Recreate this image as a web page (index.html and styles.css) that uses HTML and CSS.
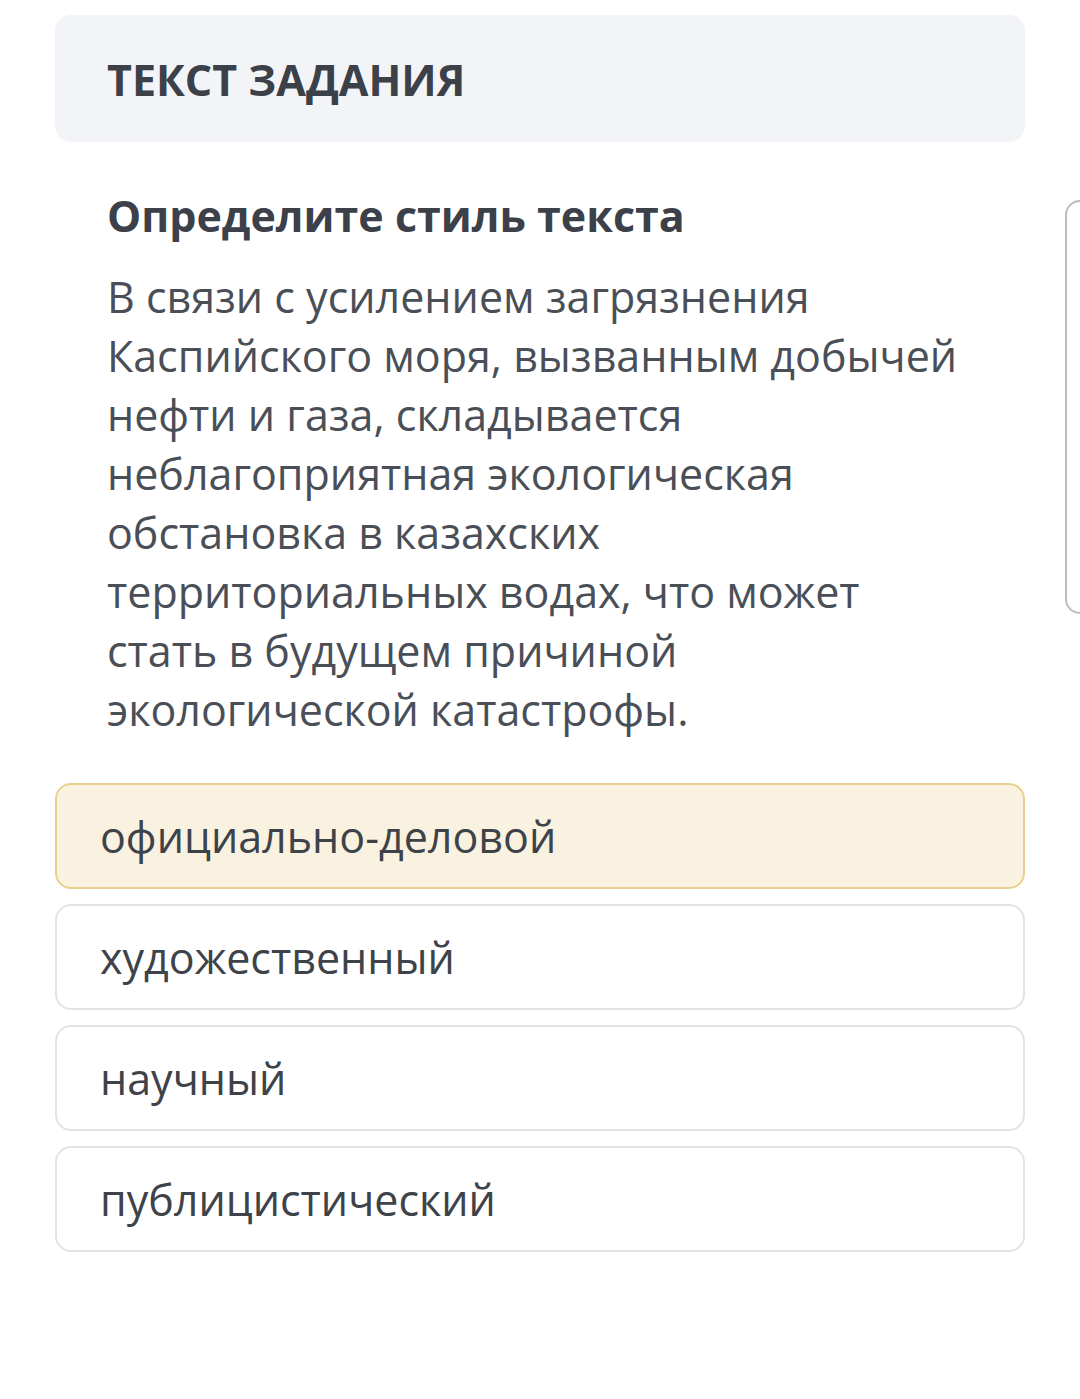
FILE: index.html
```html
<!DOCTYPE html>
<html lang="ru">
<head>
<meta charset="utf-8">
<link rel="stylesheet" href="styles.css">
</head>
<body>
<div class="page">
  <main class="main">
    <div class="task-header">ТЕКСТ ЗАДАНИЯ</div>
    <div class="task-body">
      <h2 class="question">Определите стиль текста</h2>
      <p class="passage">В связи с усилением загрязнения Каспийского моря, вызванным добычей нефти и газа, складывается неблагоприятная экологическая обстановка в казахских территориальных водах, что может стать в будущем причиной экологической катастрофы.</p>
    </div>
    <div class="options">
      <div class="option selected">официально-деловой</div>
      <div class="option">художественный</div>
      <div class="option">научный</div>
      <div class="option">публицистический</div>
    </div>
  </main>
  <aside class="side-card"></aside>
</div>
</body>
</html>
```

FILE: styles.css
```css
html, body {
  margin: 0;
  padding: 0;
  background: #ffffff;
}
body {
  width: 1080px;
  height: 1399px;
  overflow: hidden;
  font-family: "Open Sans", "Noto Sans", sans-serif;
}
.page {
  display: flex;
  align-items: flex-start;
  width: 1080px;
}
.main {
  width: 970px;
  margin-left: 55px;
  flex: none;
}
.task-header {
  box-sizing: border-box;
  margin-top: 15px;
  height: 127px;
  padding: 35px 0 0 52px;
  background: #f3f4f7;
  border-radius: 16px;
  font-size: 43px;
  line-height: 59px;
  font-weight: 700;
  color: #3b4049;
}
.task-body {
  padding: 44px 50px 0 52px;
}
.question {
  margin: 0;
  font-size: 43px;
  line-height: 59px;
  font-weight: 700;
  color: #3b4049;
}
.passage {
  margin: 22px 0 0 0;
  font-size: 43px;
  line-height: 59px;
  font-weight: 400;
  color: #4a4f57;
}
.options {
  margin-top: 44px;
  display: flex;
  flex-direction: column;
  gap: 15px;
}
.option {
  box-sizing: border-box;
  height: 106px;
  display: flex;
  align-items: center;
  padding-left: 43px;
  border: 2px solid #dfe4e6;
  border-radius: 16px;
  background: #ffffff;
  font-size: 43px;
  line-height: 59px;
  color: #3e4249;
}
.option.selected {
  background: #faf2e0;
  border-color: #e8cf8e;
}
.side-card {
  flex: none;
  box-sizing: border-box;
  margin-left: 40px;
  margin-top: 200px;
  width: 15px;
  height: 414px;
  border: 2px solid #bdbdbd;
  border-right: none;
  border-radius: 16px 0 0 16px;
  background: #ffffff;
}
```
